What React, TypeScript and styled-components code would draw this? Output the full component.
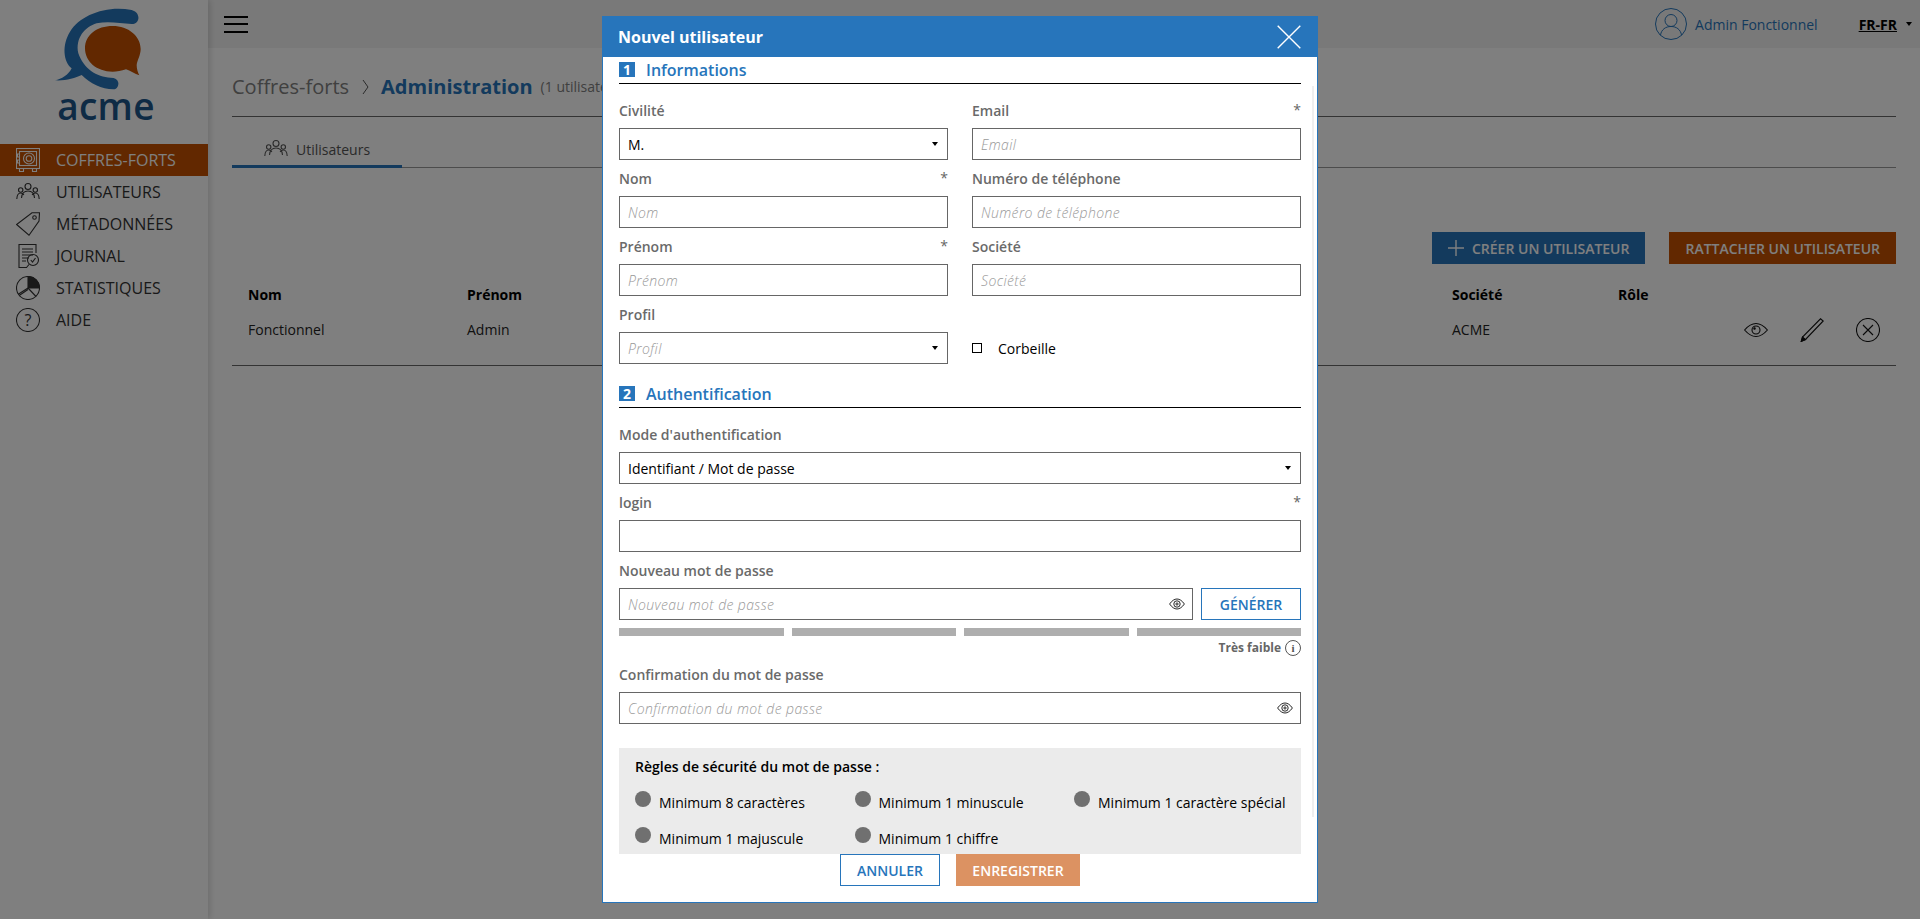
import React from 'react';
import styled, { createGlobalStyle } from 'styled-components';

const Global = createGlobalStyle`
  html, body { margin: 0; padding: 0; height: 100%; overflow: hidden; background: #fff; }
  body { font-family: "Open Sans", "Liberation Sans", sans-serif; font-size: 14px; color: #333; }
  * { box-sizing: border-box; }
`;

const Page = styled.div`display: flex; height: 919px; width: 1920px; background: #fff;`;
const Sidebar = styled.aside`width: 208px; flex: none; background: #fff; box-shadow: 2px 0 6px rgba(0,0,0,.15); position: relative; z-index: 1;`;
const LogoBlock = styled.div`height: 144px; width: 130px; margin-left: 40px; display: flex; flex-direction: column; align-items: center;`;
const LogoArt = styled.svg`width: 130px; height: 92px; display: block; flex: none;`;
const Wordmark = styled.div`font-family: "Open Sans", sans-serif; font-size: 37px; font-weight: 600; color: #1c568a; line-height: 36px; margin: -4px 0 0 2px; letter-spacing: .3px;`;
const Nav = styled.nav`display: flex; flex-direction: column;`;
const NavItem = styled.div<{ $active?: boolean }>`
  height: 32px; display: flex; align-items: center; gap: 16px; padding-left: 16px; font-size: 16px;
  background: ${p => (p.$active ? '#c45000' : 'transparent')};
  color: ${p => (p.$active ? '#fff' : '#333')};
`;
const Icon24 = styled.svg`width: 24px; height: 24px; flex: none; display: block; fill: none; stroke: currentColor; stroke-width: 1.1;`;

const Main = styled.main`flex: 1; min-width: 0; display: flex; flex-direction: column;`;
const TopBar = styled.header`height: 48px; flex: none; background: #f3f3f3; display: flex; align-items: center; padding: 0 8px 0 16px;`;
const Burger = styled.div`width: 24px; height: 17px; display: flex; flex-direction: column; justify-content: space-between;`;
const BurgerLine = styled.span`height: 2px; background: #000; display: block;`;
const TopRight = styled.div`margin-left: auto; display: flex; align-items: center;`;
const UserGlyph = styled.svg`width: 32px; height: 32px; fill: none; stroke: #2775bb; stroke-width: 1; margin-right: 8px;`;
const UserName = styled.span`color: #2775bb; font-size: 14px; margin-right: 41px;`;
const Lang = styled.span`font-weight: 700; color: #000; font-size: 14px; text-decoration: underline; margin-right: 9px;`;
const Caret = styled.span`width: 0; height: 0; border-left: 3.5px solid transparent; border-right: 3.5px solid transparent; border-top: 4.5px solid #000; display: block;`;

const Content = styled.div`padding: 0 24px; display: flex; flex-direction: column;`;
const Breadcrumb = styled.div`height: 69px; border-bottom: 1px solid #666; display: flex; align-items: center; padding-top: 9px;`;
const Crumb = styled.span`font-size: 20px; color: #808080;`;
const CrumbSep = styled.svg`width: 8px; height: 16px; margin: 0 11px 0 13px; fill: none; stroke: #555; stroke-width: 1;`;
const CrumbActive = styled.span`font-size: 20px; font-weight: 700; color: #2775bb; margin-right: 8px;`;
const CrumbCount = styled.span`font-size: 14px; color: #808080;`;
const Tabs = styled.div`height: 51px; border-bottom: 1px solid #999; display: flex;`;
const Tab = styled.div`width: 170px; height: 51px; border-bottom: 3px solid #2775bb; display: flex; align-items: center; gap: 8px; padding: 16px 0 0 32px; color: #555; font-size: 14px;`;
const Actions = styled.div`display: flex; justify-content: flex-end; gap: 24px; margin-top: 64px;`;
const SolidButton = styled.div<{ $bg: string }>`height: 32px; padding: 0 16px; display: flex; align-items: center; gap: 8px; background: ${p => p.$bg}; color: #fff; font-weight: 600; font-size: 14px; text-transform: uppercase;`;
const PlusGlyph = styled.svg`width: 16px; height: 16px; fill: none; stroke: #fff; stroke-width: 1.4;`;
const Table = styled.div`display: flex; flex-direction: column; border-bottom: 1px solid #666;`;
const TableRow = styled.div<{ $head?: boolean }>`
  display: grid; grid-template-columns: 219px 985px 166px 1fr; padding: 0 16px; align-items: center; line-height: 20px;
  height: ${p => (p.$head ? '48px' : '53px')};
  padding-top: ${p => (p.$head ? '14px' : '0')};
  padding-bottom: ${p => (p.$head ? '0' : '18px')};
  font-weight: ${p => (p.$head ? 700 : 400)};
  color: ${p => (p.$head ? '#000' : '#222')};
`;
const RowIcons = styled.div`display: flex; justify-content: flex-end; gap: 32px; align-items: center; color: #111;`;

const Overlay = styled.div`position: fixed; inset: 0; background: rgba(0,0,0,.5); z-index: 10; display: flex; justify-content: center; align-items: flex-start; padding-top: 16px;`;
const Modal = styled.div`position: relative; width: 716px; height: 887px; background: #fff; border: 1px solid #2775bb; border-top: none; display: flex; flex-direction: column;`;
const ModalHead = styled.div`height: 41px; flex: none; background: #2775bb; margin: 0 -1px; padding: 0 17px 0 16px; display: flex; align-items: center; justify-content: space-between; color: #fff; font-size: 16px; font-weight: 700;`;
const CloseGlyph = styled.svg`width: 24px; height: 24px; fill: none; stroke: #fff; stroke-width: 1.4;`;
const ModalBody = styled.div`flex: 1; min-height: 0; overflow: hidden; padding: 0 16px;`;
const ScrollTrack = styled.div`position: absolute; right: 3px; top: 70px; height: 731px; width: 2px; background: #efefef;`;
const SectionHead = styled.div<{ $gap?: boolean }>`height: 27px; margin-top: ${p => (p.$gap ? '17px' : '0')}; border-bottom: 1px solid #000; display: flex; align-items: center; gap: 11px; padding-bottom: 1px; color: #2775bb; font-size: 16px; font-weight: 600;`;
const SectionNum = styled.span`width: 16px; height: 15px; background: #2775bb; color: #fff; font-size: 14px; font-weight: 700; line-height: 15px; text-align: center; display: block;`;
const FieldGrid = styled.div`display: grid; grid-template-columns: 329px 329px; column-gap: 24px; margin-top: 8px;`;
const Stack = styled.div`margin-top: 8px; display: flex; flex-direction: column;`;
const Field = styled.div`height: 68px; display: flex; flex-direction: column; min-width: 0;`;
const LabelRow = styled.div`height: 36px; flex: none; display: flex; justify-content: space-between; padding-top: 9px; line-height: 20px;`;
const Label = styled.span`font-size: 14px; font-weight: 600; color: #6a6a6a;`;
const Required = styled.span`font-size: 14px; color: #666; line-height: 16px; margin-top: 1px;`;
const InputWrap = styled.div`position: relative; flex: 1; min-width: 0; height: 32px;`;
const TextInput = styled.input`
  width: 100%; height: 32px; border: 1px solid #666; border-radius: 0; padding: 0 8px; outline: none; background: #fff;
  font-family: "Open Sans", sans-serif; font-size: 14px; color: #000; display: block;
  &::placeholder { font-style: italic; font-weight: 300; letter-spacing: .38px; color: #999; opacity: 1; }
`;
const SelectBox = styled.div<{ $placeholder?: boolean }>`
  height: 32px; border: 1px solid #666; padding: 0 9px 0 8px; display: flex; align-items: center; justify-content: space-between; background: #fff;
  font-size: 14px; color: ${p => (p.$placeholder ? '#999' : '#000')};
  font-style: ${p => (p.$placeholder ? 'italic' : 'normal')};
  font-weight: ${p => (p.$placeholder ? 300 : 400)};
  letter-spacing: ${p => (p.$placeholder ? '.38px' : '0')};
`;
const CheckField = styled.label`display: flex; align-items: center; gap: 16px; height: 32px; margin-top: 36px; color: #000; font-size: 14px;`;
const CheckBox = styled.span`width: 10px; height: 10px; border: 1px solid #000; display: block;`;
const EyeButton = styled.svg`position: absolute; right: 8px; top: 10px; width: 16px; height: 12px; fill: none; stroke: #111; stroke-width: .9;`;
const PasswordLine = styled.div`display: flex; gap: 8px;`;
const OutlineButton = styled.div<{ $w: number }>`width: ${p => p.$w}px; height: 32px; flex: none; border: 1px solid #2775bb; color: #2775bb; background: #fff; font-size: 14px; font-weight: 600; display: flex; align-items: center; justify-content: center; text-transform: uppercase;`;
const Strength = styled.div`display: flex; gap: 8px; margin-top: 8px;`;
const StrengthBar = styled.span`height: 8px; flex: 1; background: #aeaeae; display: block;`;
const StrengthText = styled.div`height: 20px; padding-top: 3px; display: flex; justify-content: flex-end; align-items: center; gap: 4px; font-size: 12px; font-weight: 700; color: #666;`;
const InfoGlyph = styled.svg`width: 16px; height: 16px; fill: none; stroke: #555; stroke-width: 1;`;
const Rules = styled.div`margin-top: 24px; background: #ebebeb; padding: 8px 16px 0; height: 130px;`;
const RulesTitle = styled.div`font-size: 14px; font-weight: 600; color: #000; line-height: 22px;`;
const RulesGrid = styled.div`display: grid; grid-template-columns: repeat(3, 219.5px); grid-auto-rows: 36px; margin-top: 11px;`;
const Rule = styled.div`display: flex; gap: 8px; color: #000; font-size: 14px; white-space: nowrap; align-items: flex-start; line-height: 20px; padding-top: 4px;`;
const RuleDot = styled.span`width: 16px; height: 16px; border-radius: 50%; background: #707070; display: block; flex: none; margin-top: -2px;`;
const RuleText = styled.span`display: block;`;
const ModalFoot = styled.div`flex: none; height: 48px; display: flex; justify-content: center; gap: 16px; align-items: flex-start;`;
const SaveButton = styled.div`width: 124px; height: 32px; background: #dc9262; color: #fff; font-size: 14px; font-weight: 600; display: flex; align-items: center; justify-content: center; text-transform: uppercase;`;

const EyeIcon = () => (
  <>
    <path d="M.6 6C3 2.6 5.4 1 8 1s5 1.6 7.4 5C13 9.4 10.6 11 8 11S3 9.4.6 6Z" />
    <circle cx="8" cy="6" r="3.200" />
    <circle cx="8" cy="6" r="1.100" />
  </>
);

const UsersIcon = () => (
  <Icon24 viewBox="0 0 24 24">
    <circle cx="12" cy="6.500" r="3" />
    <path d="M5.500 18c.3-4.500 2.600-7 6.500-7s6.200 2.500 6.500 7" />
    <circle cx="4.700" cy="10" r="2.200" />
    <path d="M.8 19c.2-3.800 1.600-6 3.900-6 1.400 0 2.500.7 3.200 2" />
    <circle cx="19.300" cy="10" r="2.200" />
    <path d="M23.200 19c-.2-3.800-1.600-6-3.900-6-1.400 0-2.500.7-3.200 2" />
  </Icon24>
);

const fields = [
  { label: 'Nom', req: true, placeholder: 'Nom' },
  { label: 'Numéro de téléphone', req: false, placeholder: 'Numéro de téléphone' },
  { label: 'Prénom', req: true, placeholder: 'Prénom' },
  { label: 'Société', req: false, placeholder: 'Société' },
];

export default function App() {
  return (
    <>
      <Global />
      <Page>
        <Sidebar>
          <LogoBlock>
            <LogoArt viewBox="0 0 390 276">
              <path fill="#2775bb" d="M275 30C200 15 120 45 90 95 65 135 70 185 95 205 85 225 65 237 45 241c30 2 60-6 80-16 25 25 60 43 95 43 12 0 16-13 15-20-2-10-10-15-23-15-42-1-82-28-97-73-10-45 20-80 55-90 35-8 70 0 105 2 15 0 22-12 20-22-2-12-10-17-20-20Z" />
              <path fill="#c45000" d="M135 145c0-40 35-67 83-67 47 0 84 30 84 69 0 18-10 33-12 48 0 13 4 23 8 31-13-4-28-14-40-18-13 5-28 7-40 7-48 0-83-30-83-70Z" />
            </LogoArt>
            <Wordmark>acme</Wordmark>
          </LogoBlock>
          <Nav>
            <NavItem $active>
              <Icon24 viewBox="0 0 24 24">
                <rect x=".5" y=".5" width="23" height="20" />
                <rect x="3.500" y="3.500" width="17" height="14" />
                <circle cx="13" cy="10.500" r="5.500" />
                <circle cx="13" cy="10.500" r="2.800" />
                <path d="M3.500 6H1.500v3h2M3.500 12H1.500v3h2M3.500 20.500v3h4v-3M16.500 20.500v3h4v-3" />
              </Icon24>
              COFFRES-FORTS
            </NavItem>
            <NavItem><UsersIcon />UTILISATEURS</NavItem>
            <NavItem>
              <Icon24 viewBox="0 0 24 24">
                <path d="M16 .8 23.500 .8 23 9 13 23.200.6 12.500Z" />
                <circle cx="18.500" cy="5.500" r="1.800" />
              </Icon24>
              MÉTADONNÉES
            </NavItem>
            <NavItem>
              <Icon24 viewBox="0 0 24 24">
                <path d="M20 9V.5H3v23h8" />
                <path d="M6 5h11M6 8h11M6 11h11M6 14h7M6 17h4" />
                <circle cx="17" cy="16" r="5.500" />
                <path d="m14.800 16 1.700 2 3-4M13 20.500 10.500 23.500" />
              </Icon24>
              JOURNAL
            </NavItem>
            <NavItem>
              <Icon24 viewBox="0 0 24 24">
                <circle cx="12" cy="12" r="11.500" />
                <path d="M12 .5V12h11.500A11.500 11.500 0 0 0 12 .5Z" fill="currentColor" />
                <path d="M12 12 2.200 18.200M12 13.500 3.200 19.500M12 12l8 8.500" />
              </Icon24>
              STATISTIQUES
            </NavItem>
            <NavItem>
              <Icon24 viewBox="0 0 24 24">
                <circle cx="12" cy="12" r="11.500" />
                <text x="12" y="17.500" textAnchor="middle" fontSize="16" fontFamily="Open Sans, sans-serif" fontWeight="400" fill="currentColor" stroke="none">?</text>
              </Icon24>
              AIDE
            </NavItem>
          </Nav>
        </Sidebar>
        <Main>
          <TopBar>
            <Burger><BurgerLine /><BurgerLine /><BurgerLine /></Burger>
            <TopRight>
              <UserGlyph viewBox="0 0 32 32">
                <circle cx="16" cy="16" r="15.500" />
                <circle cx="16" cy="12.500" r="6" />
                <path d="M5.500 27c1-5.500 5-8.500 10.500-8.500S25.500 21.500 26.500 27" />
              </UserGlyph>
              <UserName>Admin Fonctionnel</UserName>
              <Lang>FR-FR</Lang>
              <Caret />
            </TopRight>
          </TopBar>
          <Content>
            <Breadcrumb>
              <Crumb>Coffres-forts</Crumb>
              <CrumbSep viewBox="0 0 8 16"><path d="m1 1 5 7-5 7" /></CrumbSep>
              <CrumbActive>Administration</CrumbActive>
              <CrumbCount>(1 utilisateur)</CrumbCount>
            </Breadcrumb>
            <Tabs>
              <Tab><UsersIcon />Utilisateurs</Tab>
            </Tabs>
            <Actions>
              <SolidButton $bg="#2775bb">
                <PlusGlyph viewBox="0 0 16 16"><path d="M8 0v16M0 8h16" /></PlusGlyph>
                Créer un utilisateur
              </SolidButton>
              <SolidButton $bg="#c45000">Rattacher un utilisateur</SolidButton>
            </Actions>
            <Table>
              <TableRow $head><span>Nom</span><span>Prénom</span><span>Société</span><span>Rôle</span></TableRow>
              <TableRow>
                <span>Fonctionnel</span><span>Admin</span><span>ACME</span>
                <RowIcons>
                  <Icon24 viewBox="0 0 24 24">
                    <path d="M.6 12C4.500 7.500 8 5.500 12 5.500s7.500 2 11.400 6.500c-3.900 4.500-7.400 6.500-11.400 6.500S4.500 16.500.6 12Z" />
                    <circle cx="12" cy="12" r="4" />
                    <circle cx="10.500" cy="10.500" r=".7" fill="currentColor" />
                  </Icon24>
                  <Icon24 viewBox="0 0 24 24">
                    <path d="M20.500.8 23.200 3 5.500 21.500 1.300 23.300 2.500 19Z" />
                    <path d="M1.300 23.300l1.200-4.300 3 2.500Z" fill="currentColor" />
                  </Icon24>
                  <Icon24 viewBox="0 0 24 24">
                    <circle cx="12" cy="12" r="11.500" />
                    <path d="m7 7 10 10M17 7 7 17" />
                  </Icon24>
                </RowIcons>
              </TableRow>
            </Table>
          </Content>
        </Main>
      </Page>
      <Overlay>
        <Modal>
          <ModalHead>
            Nouvel utilisateur
            <CloseGlyph viewBox="0 0 24 24"><path d="M.7.700l22.600 22.600M23.300.700.700 23.300" /></CloseGlyph>
          </ModalHead>
          <ModalBody>
            <SectionHead><SectionNum>1</SectionNum>Informations</SectionHead>
            <FieldGrid>
              <Field>
                <LabelRow><Label>Civilité</Label></LabelRow>
                <SelectBox>M.<Caret /></SelectBox>
              </Field>
              <Field>
                <LabelRow><Label>Email</Label><Required>*</Required></LabelRow>
                <TextInput placeholder="Email" />
              </Field>
              {fields.map(f => (
                <Field key={f.label}>
                  <LabelRow><Label>{f.label}</Label>{f.req && <Required>*</Required>}</LabelRow>
                  <TextInput placeholder={f.placeholder} />
                </Field>
              ))}
              <Field>
                <LabelRow><Label>Profil</Label></LabelRow>
                <SelectBox $placeholder>Profil<Caret /></SelectBox>
              </Field>
              <CheckField><CheckBox />Corbeille</CheckField>
            </FieldGrid>
            <SectionHead $gap><SectionNum>2</SectionNum>Authentification</SectionHead>
            <Stack>
              <Field>
                <LabelRow><Label>Mode d'authentification</Label></LabelRow>
                <SelectBox>Identifiant / Mot de passe<Caret /></SelectBox>
              </Field>
              <Field>
                <LabelRow><Label>login</Label><Required>*</Required></LabelRow>
                <TextInput />
              </Field>
              <Field>
                <LabelRow><Label>Nouveau mot de passe</Label></LabelRow>
                <PasswordLine>
                  <InputWrap>
                    <TextInput placeholder="Nouveau mot de passe" />
                    <EyeButton viewBox="0 0 16 12"><EyeIcon /></EyeButton>
                  </InputWrap>
                  <OutlineButton $w={100}>Générer</OutlineButton>
                </PasswordLine>
              </Field>
              <Strength><StrengthBar /><StrengthBar /><StrengthBar /><StrengthBar /></Strength>
              <StrengthText>
                Très faible
                <InfoGlyph viewBox="0 0 16 16">
                  <circle cx="8" cy="8" r="7.500" />
                  <text x="8" y="12" textAnchor="middle" fontSize="11" fontFamily="Liberation Serif, serif" fill="#555" stroke="none">i</text>
                </InfoGlyph>
              </StrengthText>
              <Field>
                <LabelRow><Label>Confirmation du mot de passe</Label></LabelRow>
                <InputWrap>
                  <TextInput placeholder="Confirmation du mot de passe" />
                  <EyeButton viewBox="0 0 16 12"><EyeIcon /></EyeButton>
                </InputWrap>
              </Field>
            </Stack>
            <Rules>
              <RulesTitle>Règles de sécurité du mot de passe :</RulesTitle>
              <RulesGrid>
                {['Minimum 8 caractères', 'Minimum 1 minuscule', 'Minimum 1 caractère spécial', 'Minimum 1 majuscule', 'Minimum 1 chiffre'].map(r => (
                  <Rule key={r}><RuleDot /><RuleText>{r}</RuleText></Rule>
                ))}
              </RulesGrid>
            </Rules>
          </ModalBody>
          <ModalFoot>
            <OutlineButton $w={100}>Annuler</OutlineButton>
            <SaveButton>Enregistrer</SaveButton>
          </ModalFoot>
          <ScrollTrack />
        </Modal>
      </Overlay>
    </>
  );
}
